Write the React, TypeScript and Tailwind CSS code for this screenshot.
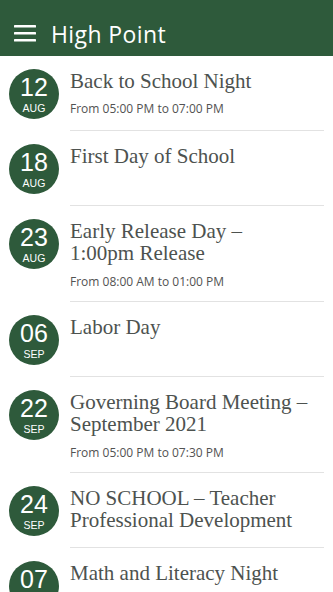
interface EventItem {
  day: string;
  month: string;
  title: string[];
  time?: string;
}

const events: EventItem[] = [
  { day: "12", month: "AUG", title: ["Back to School Night"], time: "From 05:00 PM to 07:00 PM" },
  { day: "18", month: "AUG", title: ["First Day of School"] },
  { day: "23", month: "AUG", title: ["Early Release Day –", "1:00pm Release"], time: "From 08:00 AM to 01:00 PM" },
  { day: "06", month: "SEP", title: ["Labor Day"] },
  { day: "22", month: "SEP", title: ["Governing Board Meeting –", "September 2021"], time: "From 05:00 PM to 07:30 PM" },
  { day: "24", month: "SEP", title: ["NO SCHOOL – Teacher", "Professional Development"] },
  { day: "07", month: "OCT", title: ["Math and Literacy Night"] },
];

export default function App() {
  return (
    <div className="h-[592px] w-[333px] overflow-hidden bg-white">
      {/* header */}
      <div className="flex h-[56px] items-end bg-[#2e5a3b] pb-[7px] pl-[14px]">
        <svg width="22" height="17" viewBox="0 0 22 17" className="mb-[7px]">
          <rect x="0" y="0" width="22" height="2.6" rx="0.6" fill="#fff" />
          <rect x="0" y="7" width="22" height="2.6" rx="0.6" fill="#fff" />
          <rect x="0" y="14" width="22" height="2.6" rx="0.6" fill="#fff" />
        </svg>
        <span className="ml-[15px] font-['Open_Sans',sans-serif] text-[23px] leading-[30px] tracking-[0.4px] text-white">
          High Point
        </span>
      </div>

      {/* events */}
      <div>
        {events.map((ev) => (
          <div key={ev.day + ev.month} className="flex pl-[9px]">
            <div className="py-[12.5px]">
              <div className="flex h-[50px] w-[50px] flex-col items-center rounded-full bg-[#2e5a3b] font-['Liberation_Sans',sans-serif] text-white">
                <span className="mt-[6px] text-[25px] leading-[24px]">{ev.day}</span>
                <span className="mt-[4px] text-[10.5px] leading-[11px]">{ev.month}</span>
              </div>
            </div>
            <div className="ml-[11px] mr-[9px] flex-1 border-b border-[#e2e2e2] pb-[11.5px] pt-[13.5px]">
              <p className="font-['Liberation_Serif',serif] text-[21px] leading-[22.5px] text-[#4d524f]">
                {ev.title.map((line) => (
                  <span key={line} className="block whitespace-nowrap">
                    {line}
                  </span>
                ))}
              </p>
              {ev.time && (
                <p className="mt-[9px] font-['Open_Sans',sans-serif] text-[12px] leading-[16px] text-[#525252]">
                  {ev.time}
                </p>
              )}
            </div>
          </div>
        ))}
      </div>
    </div>
  );
}
